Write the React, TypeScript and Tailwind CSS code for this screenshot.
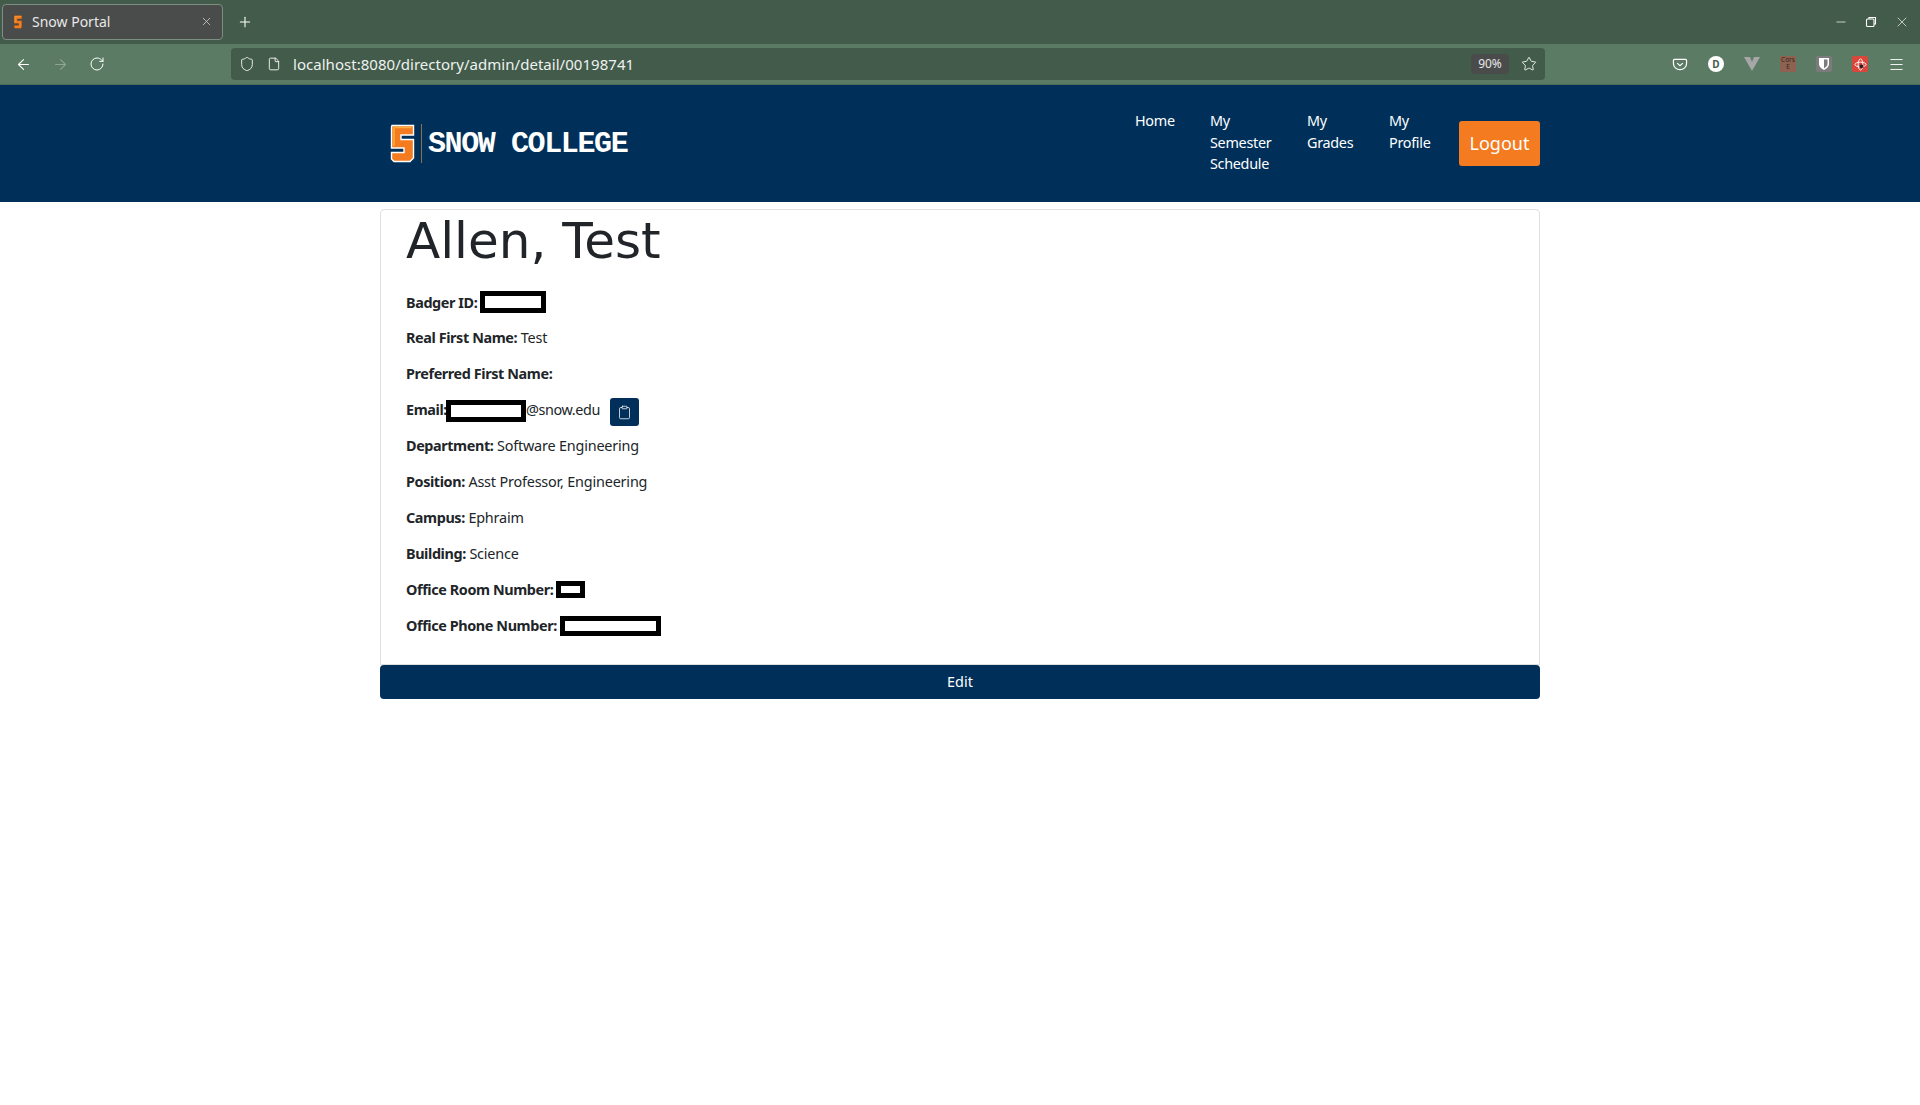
import { ArrowLeft, ArrowRight, RotateCw, Shield, File, Star, Menu, X, Plus, Minus, Clipboard } from "lucide-react";

const ubuntu = "font-['Noto_Sans','Open_Sans',sans-serif]";

function Row({ label, value, children }: { label: string; value?: string; children?: React.ReactNode }) {
  return (
    <div className="flex items-center h-[21.6px] mb-[14.3px] whitespace-pre tracking-[-0.18px]">
      <b className="font-bold tracking-[-0.4px]">{label}</b>
      {value ? <span> {value}</span> : null}
      {children}
    </div>
  );
}

function Redact({ w, h, b, ml = 0, mt = 0 }: { w: number; h: number; b: number; ml?: number; mt?: number }) {
  return <span className="inline-block bg-white border-black shrink-0" style={{ width: w, height: h, borderWidth: b, marginLeft: ml, marginTop: mt }} />;
}

function SnowS({ w, h, edge }: { w: number; h: number; edge: string }) {
  return (
    <svg width={w} height={h} viewBox="0 0 25 39">
      <path d="M2 1.500H23.500V11H11V15.500H23.500V34L20 37.500H4L1.500 35V28.500H14V24H1.500V3Z" fill="#f47b20" stroke={edge} strokeWidth="1.4" />
      <path d="M4 3.500H21.500M4 3.500V22" fill="none" stroke="#fbb040" strokeWidth="1.5" />
    </svg>
  );
}

export default function App() {
  return (
    <div className={`min-h-[1105px] bg-white text-[14.4px] text-[#212529] ${ubuntu}`}>
      {/* Tab strip */}
      <div className="h-[44px] bg-[#435b4b] flex items-center text-white">
        <div className="ml-[2px] w-[221px] h-[36px] mt-[-1px] rounded-[4px] bg-[#4a4b4b] border border-[#7d8f82] flex items-center pl-[9px] pr-[9px] text-[14px] shrink-0">
          <span className="w-[12px] flex justify-center"><SnowS w={10} h={14} edge="#5a4a30" /></span>
          <span className="ml-[8px] flex-1 text-[#e8e8e8]">Snow Portal</span>
          <X size={13} strokeWidth={1.4} className="text-[#d8d8d8]" />
        </div>
        <Plus size={16} strokeWidth={1.6} className="ml-[14px]" />
        <div className="ml-auto flex items-center gap-[16px] pr-[10px]">
          <Minus size={14} strokeWidth={1.2} />
          <svg width="14" height="14" viewBox="0 0 14 14" fill="none" stroke="white" strokeWidth="1.1"><rect x="2.500" y="4" width="7.500" height="7.500" rx="1" /><path d="M5 4V2.500H11.500V9H10" /></svg>
          <X size={16} strokeWidth={1} />
        </div>
      </div>
      {/* Toolbar */}
      <div className="h-[41px] bg-[#5c7b64] border-b border-[#4f6a57] flex items-center text-white">
        <div className="w-[231px] pl-[15px] flex items-center gap-[20px] shrink-0">
          <ArrowLeft size={17} strokeWidth={1.5} />
          <ArrowRight size={17} strokeWidth={1.5} className="text-[#8ea594]" />
          <RotateCw size={16} strokeWidth={1.5} />
        </div>
        <div className="w-[1314px] h-[32px] bg-[#435b4b] rounded-[4px] flex items-center pl-[8px] pr-[8px] shrink-0">
          <Shield size={16} strokeWidth={1.3} />
          <File size={14} strokeWidth={1.5} className="ml-[12px]" />
          <span className="ml-[12px] text-[15px] tracking-[0.03px] text-[#eef2ef]">localhost:8080/directory/admin/detail/00198741</span>
          <span className="ml-auto w-[38px] h-[20px] rounded-[3px] bg-[#4a4b4b] text-[12px] flex items-center justify-center text-[#e8e8e8]">90%</span>
          <Star size={16} strokeWidth={1.3} className="ml-[12px]" />
        </div>
        <div className="flex-1 flex items-center pl-[127px] gap-[20px]">
          <svg width="16" height="15" viewBox="0 0 16 16" fill="none" stroke="white" strokeWidth="1.3"><path d="M2 2.500H14A1 1 0 0 1 15 3.500V7A7 6.500 0 0 1 1 7V3.500A1 1 0 0 1 2 2.500Z" /><path d="M5 6.500L8 9.200L11 6.500" /></svg>
          <span className="w-[16px] h-[16px] rounded-full bg-white text-[#435b4b] text-[10px] font-bold flex items-center justify-center">D</span>
          <svg width="16" height="14" viewBox="0 0 16 14"><path d="M0 0H6L8 5L10 0H16L8 14Z" fill="#a7a7a7" /></svg>
          <span className="w-[16px] h-[16px] bg-[#8d6250] text-[#33241e] text-[6.500px] leading-[7px] text-center">Cors E</span>
          <span className="w-[16px] h-[16px] rounded-[2px] bg-[#7b7b7b] flex items-center justify-center">
            <svg width="10" height="12" viewBox="0 0 10 12"><path d="M0 0H10V6C10 9 7 11 5 12C3 11 0 9 0 6Z" fill="#ffffff" /><path d="M5 1.500H8.500V6C8.500 8 6.500 9.500 5 10.300Z" fill="#7b7b7b" /></svg>
          </span>
          <span className="w-[16px] h-[16px] rounded-[2px] bg-[#d9473c] flex items-center justify-center">
            <svg width="13" height="13" viewBox="0 0 14 14" fill="none" stroke="white" strokeWidth="1"><ellipse cx="7" cy="7" rx="6" ry="2.500" /><ellipse cx="7" cy="7" rx="2.500" ry="6" /><circle cx="8" cy="9" r="2" fill="#222" stroke="none" /></svg>
          </span>
          <Menu size={17} strokeWidth={1.3} />
        </div>
      </div>
      {/* Site header */}
      <header className="h-[117px] bg-[#00305a]">
        <div className="w-[1160px] mx-auto h-full flex items-center text-white">
          <div className="ml-[10px] flex items-center">
            <SnowS w={25} h={39} edge="#ffffff" />
            <span className="ml-[6px] w-px h-[39px] bg-[#8a7449]" />
            <span className="ml-[6px] font-['Liberation_Mono',monospace] font-bold text-[30px] leading-none tracking-[-1.4px]">SNOW COLLEGE</span>
          </div>
          <nav className="ml-auto flex items-center tracking-[-0.3px]">
            <div className="w-[75px] leading-[21.6px] h-[65px] mt-[-2px]">Home</div>
            <div className="w-[97px] leading-[21.6px] h-[65px] mt-[-2px]">My<br />Semester<br />Schedule</div>
            <div className="w-[82px] leading-[21.6px] h-[65px] mt-[-2px]">My<br />Grades</div>
            <div className="w-[70px] leading-[21.6px] h-[65px] mt-[-2px]">My<br />Profile</div>
            <button className="w-[81px] h-[45px] bg-[#f47b20] rounded-[3px] text-[18px] tracking-normal text-white">Logout</button>
          </nav>
        </div>
      </header>
      {/* Card */}
      <main className="w-[1160px] mx-auto mt-[7px]">
        <div className="border border-[#dfdfdf] rounded-t-[4px] pl-[25px] pt-[1px] h-[456px]">
          <h1 className="font-['DejaVu_Sans',sans-serif] text-[50px] leading-[60px] mb-[20.500px]">Allen, Test</h1>
          <Row label="Badger ID:"><Redact w={66} h={22} b={5} ml={3} /></Row>
          <Row label="Real First Name:" value="Test" />
          <Row label="Preferred First Name:" />
          <Row label="Email:">
            <Redact w={80} h={22} b={5} ml={-1} mt={2} />
            <span className="tracking-[-0.4px]">@snow.edu</span>
            <span className="ml-[10px] w-[29px] h-[28px] mt-[5px] bg-[#00305a] rounded-[3px] flex items-center justify-center text-white">
              <Clipboard size={15} strokeWidth={1.2} />
            </span>
          </Row>
          <Row label="Department:" value="Software Engineering" />
          <Row label="Position:" value="Asst Professor, Engineering" />
          <Row label="Campus:" value="Ephraim" />
          <Row label="Building:" value="Science" />
          <Row label="Office Room Number:"><Redact w={29} h={17} b={5} ml={3} /></Row>
          <Row label="Office Phone Number:"><Redact w={101} h={20} b={5} ml={3} mt={2} /></Row>
        </div>
        <button className="block w-full h-[34px] bg-[#00305a] text-white rounded-[4px] text-center">Edit</button>
      </main>
    </div>
  );
}
